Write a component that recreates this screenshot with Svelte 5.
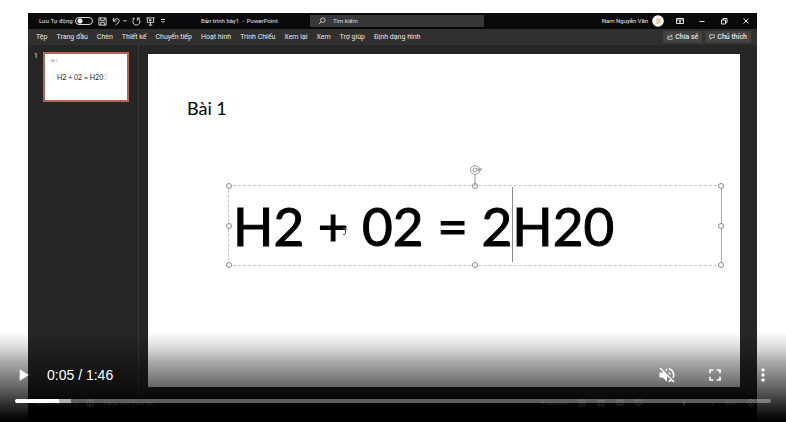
<script>
  const menus = ['Tệp', 'Trang đầu', 'Chèn', 'Thiết kế', 'Chuyển tiếp', 'Hoạt hình', 'Trình Chiếu', 'Xem lại', 'Xem', 'Trợ giúp', 'Định dạng hình'];
  const handles = ['nw', 'n', 'ne', 'w', 'e', 'sw', 's', 'se'];
  const duration = 106;
  let position = $state(6.2);
  const played = $derived((position / duration) * 100);
</script>

<main class="player">
  <section class="app">
    <header class="titlebar">
      <div class="quick">
        <label class="autosave">Lưu Tự động <input type="checkbox" role="switch" /></label>
        <button aria-label="Lưu"><svg viewBox="0 0 10 10"><path d="M1 1h8v8H1zM3 1v3h4V1M3 9V6h4v3" /></svg></button>
        <button class="undo" aria-label="Hoàn tác"><svg viewBox="0 0 10 10"><path d="M1.500 1v3.500H5M1.700 4.300C4 1 8.500 1.600 8 4.500 7.800 6 6 7.500 4 9" /></svg><svg class="chev" viewBox="0 0 4 4"><path d="M.5 1 2 2.500 3.500 1" /></svg></button>
        <button aria-label="Làm lại"><svg viewBox="0 0 10 10"><path d="M6 4V1.200H9M6.500 1.500A3.900 3.900 0 1 1 2.500 2M.5 1.500H3" /></svg></button>
        <button aria-label="Trình chiếu"><svg viewBox="0 0 10 10"><path d="M.5 1h9M1.500 1v5h7V1M5 6v3M3 9h4M4 2.500v2L6 3.500z" /></svg></button>
        <button class="more-tools" aria-label="Tùy chỉnh"><svg class="chev" viewBox="0 0 4 4"><path d="M0 .5h4M.5 2 2 3.500 3.500 2" /></svg></button>
      </div>
      <h1>Bản trình bày1&nbsp; - &nbsp;PowerPoint</h1>
      <label class="search">
        <svg viewBox="0 0 10 10"><circle cx="6" cy="4" r="2.800" /><path d="M4 6 1 9" /></svg>
        <input type="text" placeholder="Tìm kiếm" aria-label="Tìm kiếm" />
      </label>
      <div class="account">
        <span>Nam Nguyễn Văn</span>
        <svg class="avatar" viewBox="0 0 12 12"><circle cx="6" cy="6" r="5.800" fill="#fff" /><path d="M4 3h3v6H4z" fill="#e9d6a8" /><path d="M7 4h2v4H7z" fill="#b9d8dc" /></svg>
      </div>
      <div class="window-buttons">
        <button aria-label="Tùy chọn dải băng"><svg viewBox="0 0 8 8"><path d="M.5 1.500h7v5h-7zM.5 3h7M4 6V4M3 5l1-1 1 1" /></svg></button>
        <button aria-label="Thu nhỏ"><svg viewBox="0 0 8 8"><path d="M1.500 4.500h5" /></svg></button>
        <button aria-label="Khôi phục"><svg viewBox="0 0 8 8"><path d="M1.500 3h4v4h-4zM3 3V1.500h4v4H5.500" /></svg></button>
        <button aria-label="Đóng"><svg viewBox="0 0 8 8"><path d="m1.500 1.500 5 5m0-5-5 5" /></svg></button>
      </div>
    </header>

    <nav class="ribbon">
      {#each menus as menu}<button>{menu}</button>{/each}
      <div class="share">
        <button><svg viewBox="0 0 8 8"><path d="M3 3H1v4h6V5M2.500 5C3 3 4 2.500 6 2.500M5 1l2 1.500L5 4" /></svg>Chia sẻ</button>
        <button><svg viewBox="0 0 8 8"><path d="M1 1h6v4H3.500L2 7V5H1z" /></svg>Chú thích</button>
      </div>
    </nav>

    <div class="workspace">
      <aside>
        <span>1</span>
        <button class="thumb" aria-label="Trang chiếu 1"><small>Bài 1</small><span>H2 + 02 = H20<i>0</i></span></button>
      </aside>
      <article class="slide">
        <h2>Bài 1</h2>
        <div class="textbox">
          <p>H2 + 02 = 2<span class="caret"></span>H20</p>
          {#each handles as handle}<span class="handle {handle}"></span>{/each}
          <svg class="rotate" viewBox="0 0 14 22"><path d="M6 11v11" /><circle cx="6" cy="6" r="4.500" /><circle cx="6" cy="6" r="2" /><path d="m8 5 2.500 2.500L13 5z" /></svg>
          <svg class="pointer" viewBox="0 0 4 8"><path d="M0 .5h3M2.500 0v6M0 6.500h2" /></svg>
        </div>
      </article>
    </div>

    <footer class="status">
      <span>Trang chiếu 1 / 1</span>
      <svg viewBox="0 0 8 8"><path d="M1 1h6v6H1zM4 1v6" /></svg>
      <span>Tiếng Anh (Hoa Kỳ)</span>
      <div class="views">
        <span>≜ Ghi chú</span>
        <svg viewBox="0 0 8 8"><path d="M1 1h6v6H1zM3 3h2v2H3z" /></svg>
        <svg viewBox="0 0 8 8"><path d="M1 1h2v2H1zM5 1h2v2H5zM1 5h2v2H1zM5 5h2v2H5z" /></svg>
        <svg viewBox="0 0 8 8"><path d="M1 1h6v5H1zM4 1v6" /></svg>
        <svg viewBox="0 0 8 8"><path d="M0 1h8M1 1v4h6V1M4 5v3" /></svg>
        <span class="zoom"><i>−</i><b></b><i>+</i></span>
        <span>96%</span>
        <svg viewBox="0 0 8 8"><path d="m4 0 4 4-4 4-4-4zM4 2v4M2 4h4" /></svg>
      </div>
    </footer>
  </section>

  <section class="controls" aria-label="Điều khiển video">
    <div class="row">
      <button aria-label="Phát"><svg viewBox="0 0 24 24"><path d="M8 5v14l11-7z" /></svg></button>
      <time>0:05 / 1:46</time>
      <div class="right">
        <button aria-label="Bật âm thanh"><svg viewBox="0 0 24 24"><path d="M16.500 12c0-1.770-1.020-3.290-2.500-4.030v2.210l2.450 2.450c.03-.2.050-.41.050-.63zm2.500 0c0 .94-.2 1.820-.54 2.640l1.510 1.510C20.630 14.910 21 13.500 21 12c0-4.280-2.990-7.860-7-8.770v2.060c2.890.86 5 3.540 5 6.710zM4.270 3 3 4.270 7.730 9H3v6h4l5 5v-6.730l4.250 4.250c-.67.52-1.420.93-2.250 1.180v2.060c1.380-.31 2.630-.95 3.690-1.810L19.730 21 21 19.730l-9-9L4.270 3zM12 4 9.910 6.090 12 8.180V4z" /></svg></button>
        <button aria-label="Toàn màn hình"><svg viewBox="0 0 24 24"><path d="M7 14H5v5h5v-2H7v-3zm-2-4h2V7h3V5H5v5zm12 7h-3v2h5v-5h-2v3zM14 5v2h3v3h2V5h-5z" /></svg></button>
        <button aria-label="Tùy chọn khác"><svg viewBox="0 0 24 24"><path d="M12 8c1.100 0 2-.9 2-2s-.9-2-2-2-2 .9-2 2 .9 2 2 2zm0 2c-1.100 0-2 .9-2 2s.9 2 2 2 2-.9 2-2-.9-2-2-2zm0 6c-1.100 0-2 .9-2 2s.9 2 2 2 2-.9 2-2-.9-2-2-2z" /></svg></button>
      </div>
    </div>
    <input class="timeline" type="range" min="0" max={duration} step="any" bind:value={position} aria-label="Thời gian" style="--played: {played}%" />
  </section>
</main>

<style>
  * { box-sizing: border-box; }
  button { display: flex; align-items: center; padding: 0; border: 0; background: none; color: inherit; font: inherit; white-space: nowrap; }
  svg { display: block; flex: none; }
  .app svg { fill: none; stroke: currentColor; }
  .player { position: relative; display: flex; height: 100vh; min-height: 320px; padding: 13px 29px 0 28px; overflow: hidden; background: #fff; }
  .app { display: flex; flex: 1; flex-direction: column; min-width: 0; padding-bottom: 13px; background: #000; color: #e4e4e4; font: 7px/12px Roboto, "Noto Sans", sans-serif; }

  .titlebar { display: flex; align-items: center; height: 16px; background: #0a0a0c; font-size: 6px; white-space: nowrap; }
  .quick { display: flex; align-items: center; gap: 5px; width: 173px; padding-left: 11px; }
  .quick svg { width: 9px; height: 9px; }
  .quick svg.chev { width: 4px; height: 4px; }
  .autosave { display: flex; align-items: center; gap: 2px; }
  .autosave input { appearance: none; width: 18px; height: 8px; margin: 0; border: 1px solid #ddd; border-radius: 4px; background: radial-gradient(circle at 4px 3px, #fff 2px, transparent 3px); }
  .undo { gap: 2px; }
  .more-tools { margin-left: 1px; }
  h1 { width: 109px; margin: 0; font: inherit; }
  .search { display: flex; align-items: center; gap: 7px; flex: 0 1 174px; height: 12px; padding-left: 8px; background: #373739; }
  .search svg { width: 8px; height: 8px; }
  .search input { flex: 1; min-width: 0; padding: 0; border: 0; background: none; color: inherit; font: inherit; }
  .search input::placeholder { color: #ddd; opacity: 1; }
  .account { display: flex; align-items: center; gap: 4px; margin-left: auto; }
  .account .avatar { width: 12px; height: 12px; stroke: none; }
  .window-buttons { display: flex; gap: 14px; padding: 0 7px 0 12px; }
  .window-buttons svg { width: 8px; height: 8px; }

  .ribbon { display: flex; align-items: center; gap: 9px; height: 16px; padding: 0 6px 0 8px; background: #31302f; }
  .share { display: flex; gap: 3px; margin-left: auto; font-weight: 500; }
  .share button { gap: 2px; height: 12px; padding: 0 4px; background: #434241; }
  .share svg { width: 6px; height: 6px; }

  .workspace { display: flex; flex: 1; min-height: 0; background: #262626; }
  aside { display: flex; align-items: flex-start; gap: 5px; width: 111px; padding: 7px 9px 0 6px; border-right: 1px solid #3a3a3a; }
  aside > span { line-height: 8px; }
  .thumb { flex: 1; flex-direction: column; align-items: flex-start; height: 50px; padding: 5px 0 0 6px; border: 2px solid #b96353; background: #fff; color: #222; font-family: Lato, sans-serif; }
  .thumb small { font-size: 3px; line-height: 4px; color: #777; }
  .thumb span { padding: 7px 0 0 6px; font-size: 7px; line-height: 14px; }
  .thumb i { color: #ccc; font-style: normal; }
  .slide { flex: 1; min-width: 0; margin: 9px 17px 10px 9px; padding: 43px 18px 0 80px; background: #fff; color: #000; font-family: Lato, "Open Sans", sans-serif; }
  h2 { margin: 0 0 66px -41px; font-size: 18px; font-weight: 400; line-height: 22px; }
  .textbox { position: relative; height: 81px; border: 1px dashed #c4c4c4; border-right: 1px solid #aaa; }
  .textbox p { margin: 0; padding-left: 4px; font-size: 53px; line-height: 80px; white-space: nowrap; -webkit-text-stroke: 1px #000; }
  .caret { position: absolute; top: 1px; width: 1px; height: 75px; background: #888; }
  .handle { position: absolute; width: 6px; height: 6px; border: 1px solid #888; border-radius: 50%; background: #fff; transform: translate(-50%, -50%); top: 50%; left: 50%; }
  .nw, .n, .ne { top: 0; }
  .sw, .s, .se { top: 100%; }
  .nw, .w, .sw { left: 0; }
  .ne, .e, .se { left: 100%; }
  .rotate { position: absolute; bottom: 100%; left: 50%; width: 14px; height: 22px; margin-left: -6px; color: #999; }
  .pointer { position: absolute; top: 42px; left: 114px; width: 4px; height: 8px; color: #555; }

  .status { display: flex; align-items: center; gap: 9px; height: 12px; padding: 0 2px 0 4px; background: #1c1c1c; color: #bbb; font-size: 6px; white-space: nowrap; }
  .status svg { width: 8px; height: 8px; }
  .views { display: flex; align-items: center; gap: 11px; margin-left: auto; }
  .zoom { display: flex; align-items: center; justify-content: space-between; width: 60px; }
  .zoom b { width: 2px; height: 5px; background: currentColor; }

  .controls { position: absolute; inset: auto 0 0; padding: 23px 0 19px; background: linear-gradient(transparent, rgba(0, 0, 0, .17) 20%, rgba(0, 0, 0, .32) 32%, rgba(0, 0, 0, .48) 48%, rgba(0, 0, 0, .6) 61%, rgba(0, 0, 0, .79) 78%, rgba(0, 0, 0, .94) 92%, #000); color: #fff; }
  .row { display: flex; align-items: center; height: 40px; font: 14px/20px "Liberation Sans", Arial, sans-serif; }
  .row button { justify-content: center; width: 48px; height: 40px; }
  .row > button { width: 47px; padding-right: 2px; }
  .row svg { width: 20px; height: 20px; fill: currentColor; }
  .right { display: flex; margin-left: auto; margin-right: -1px; }
  .timeline { display: block; appearance: none; width: calc(100% - 30px); height: 4px; margin: 4px 15px 0; border-radius: 2px; background: linear-gradient(90deg, #fff var(--played), #b0b0b0 var(--played) 7.400%, rgba(255, 255, 255, .35) 7.400%); }
  .timeline::-webkit-slider-thumb { appearance: none; width: 1px; height: 4px; background: transparent; }
</style>
